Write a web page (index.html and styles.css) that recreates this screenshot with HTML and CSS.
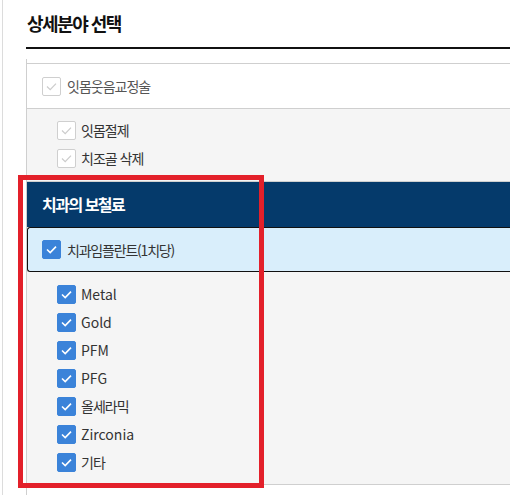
FILE: index.html
```html
<!DOCTYPE html>
<html lang="ko">
<head>
    <meta charset="UTF-8">
    <meta name="viewport" content="width=device-width, initial-scale=1.0">
    <title>상세분야 선택</title>
    <link rel="stylesheet" href="styles.css">
</head>
<body>
    <div class="wrap">
        <div class="head">
            <h2>상세분야 선택</h2>
        </div>
        <div class="panel">
            <div class="group">
                <label class="row top"><span class="box"></span><span class="ko">잇몸웃음교정술</span></label>
                <div class="sub">
                    <label class="row"><span class="box"></span><span class="ko">잇몸절제</span></label>
                    <label class="row"><span class="box"></span><span class="ko">치조골 삭제</span></label>
                </div>
            </div>
            <div class="group">
                <div class="cat">치과의 보철료</div>
                <label class="row top on selected"><span class="box"></span><span class="mix">치과임플란트(1치당)</span></label>
                <div class="sub">
                    <label class="row on"><span class="box"></span>Metal</label>
                    <label class="row on"><span class="box"></span>Gold</label>
                    <label class="row on"><span class="box"></span>PFM</label>
                    <label class="row on"><span class="box"></span>PFG</label>
                    <label class="row on"><span class="box"></span><span class="ko">올세라믹</span></label>
                    <label class="row on"><span class="box"></span>Zirconia</label>
                    <label class="row on"><span class="box"></span><span class="ko">기타</span></label>
                </div>
            </div>
        </div>
        <div class="mark"></div>
    </div>
</body>
</html>
```

FILE: styles.css
```css
body {
    margin: 0;
    font-family: "Noto Sans CJK KR", "Noto Sans", sans-serif;
    background: #fff;
    color: #333;
    height: 495px;
    overflow: hidden;
}
.wrap {
    position: relative;
    margin-left: 2px;
    border-left: 1px solid #dcdcdc;
    padding-left: 23px;
    height: 495px;
}
.head {
    padding: 10px 0 10px 1px;
    border-bottom: 2px solid #111;
}
.head h2 {
    margin: 0;
    font-size: 18px;
    letter-spacing: -1.5px;
    line-height: 27px;
    font-weight: 700;
    color: #111;
}
.panel {
    margin-top: 10px;
    padding-top: 4px;
    border-left: 1px solid #cfcfcf;
    height: 432px;
}
.group {
    border-top: 1px solid #cfcfcf;
}
.row {
    display: flex;
    align-items: center;
    gap: 6px;
    height: 28px;
    font-size: 14px;
    color: #555;
}
.row.top {
    height: 44px;
    padding-left: 15px;
    background: #fff;
    border-bottom: 1px solid #cfcfcf;
}
.sub {
    background: #f5f5f5;
    padding: 7px 0 9px 30px;
}
.group + .group .sub {
    padding: 8px 0 8px 30px;
    border-bottom: 1px solid #cfcfcf;
}
.sub .row {
    gap: 5px;
    color: #333;
}
.ko {
    letter-spacing: -1px;
}
.mix {
    letter-spacing: -1.2px;
}
.box {
    width: 17px;
    height: 17px;
    border: 1px solid #cfcfcf;
    border-radius: 2px;
    background: #fff url("data:image/svg+xml,%3Csvg xmlns='http://www.w3.org/2000/svg' viewBox='0 0 19 19'%3E%3Cpolyline points='5,9.5 8.2,12.6 14,6.6' fill='none' stroke='%23cccccc' stroke-width='1.2'/%3E%3C/svg%3E") center / 19px 19px no-repeat;
    flex: none;
}
.on .box {
    border-color: #3b83d9;
    background: #3b83d9 url("data:image/svg+xml,%3Csvg xmlns='http://www.w3.org/2000/svg' viewBox='0 0 19 19'%3E%3Cpolyline points='5,9.5 8.2,12.6 14,6.6' fill='none' stroke='%23ffffff' stroke-width='1.6'/%3E%3C/svg%3E") center / 19px 19px no-repeat;
}
.cat {
    background: #053a6b;
    color: #fff;
    font-size: 16px;
    font-weight: 700;
    letter-spacing: -1.5px;
    height: 45px;
    line-height: 45px;
    padding-left: 15px;
}
.row.selected {
    background: #d9eefb;
    border: 1px solid #111;
    border-right: 0;
    border-radius: 3px 0 0 3px;
    height: 43px;
    padding-left: 14px;
    color: #333;
}
.mark {
    position: absolute;
    left: 15px;
    top: 175px;
    width: 236px;
    height: 303px;
    border: 5px solid #e3202a;
}
```
